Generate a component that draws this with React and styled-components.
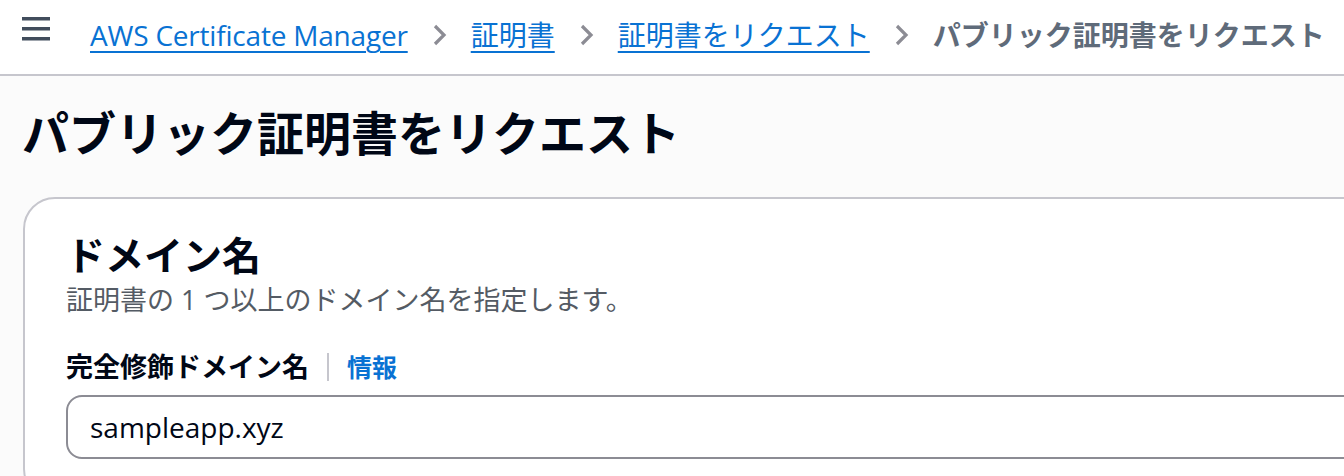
import React from 'react';
import styled, { createGlobalStyle } from 'styled-components';

const GlobalStyle = createGlobalStyle`
  html, body {
    margin: 0;
    padding: 0;
    background: #fbfbfb;
    overflow: hidden;
  }
  body {
    font-family: "Open Sans", "Noto Sans CJK JP", sans-serif;
    color: #000716;
  }
`;

const TopBar = styled.header`
  box-sizing: border-box;
  display: flex;
  align-items: center;
  height: 76px;
  padding: 0 0 4px 22px;
  background: #ffffff;
  border-bottom: 2px solid #c6c6cd;
`;

const MenuButton = styled.button`
  display: flex;
  align-items: center;
  justify-content: center;
  width: 28px;
  height: 24px;
  margin: -12px 40px 0 0;
  padding: 0;
  border: none;
  background: none;
  cursor: pointer;
`;

const Breadcrumbs = styled.nav`
  display: flex;
  align-items: center;
  font-size: 28px;
  line-height: 36px;
  white-space: nowrap;
`;

const Crumb = styled.a`
  color: #0972d3;
  letter-spacing: ${props => (props.latin ? '-0.2px' : '0')};
  text-decoration: underline;
  text-decoration-thickness: 2px;
  text-underline-offset: 5px;
  cursor: pointer;
`;

const CurrentCrumb = styled.span`
  color: #5f6b7a;
  font-weight: 700;
`;

const Separator = styled.span`
  display: flex;
  align-items: center;
  margin: 0 24px 0 25px;
`;

const Main = styled.main`
  padding: 29px 0 0 22px;
`;

const PageTitle = styled.h1`
  margin: 0 0 36px;
  font-size: 47px;
  line-height: 56px;
  font-weight: 700;
  color: #000716;
`;

const Container = styled.section`
  margin: 0 -80px 0 1px;
  padding: 32px 40px 40px 41px;
  background: #ffffff;
  border: 2px solid #c6c6cd;
  border-radius: 32px;
`;

const SectionTitle = styled.h2`
  margin: 0;
  font-size: 39px;
  line-height: 48px;
  font-weight: 700;
`;

const Description = styled.p`
  margin: 3px 0 0;
  font-size: 27px;
  line-height: 36px;
  color: #545b64;
`;

const FieldLabel = styled.div`
  display: flex;
  align-items: center;
  margin-top: 31px;
  font-size: 27px;
  line-height: 36px;
  font-weight: 700;
`;

const LabelDivider = styled.span`
  width: 2px;
  height: 28px;
  margin: 0 18px;
  background: #c6c6cd;
`;

const InfoLink = styled.a`
  color: #0972d3;
  font-size: 25px;
  font-weight: 700;
  cursor: pointer;
`;

const TextInput = styled.input`
  box-sizing: border-box;
  display: block;
  width: 100%;
  height: 64px;
  margin-top: 10px;
  padding: 0 22px;
  font-family: "Open Sans", "Noto Sans CJK JP", sans-serif;
  font-size: 28px;
  color: #000716;
  background: #ffffff;
  border: 2px solid #8c8c94;
  border-radius: 16px;
  outline: none;
`;

const MenuIcon = () => (
  <svg width="28" height="24" viewBox="0 0 28 24">
    <rect x="0" y="0" width="28" height="3.5" fill="#414d5c" />
    <rect x="0" y="10" width="28" height="3.5" fill="#414d5c" />
    <rect x="0" y="20" width="28" height="3.5" fill="#414d5c" />
  </svg>
);

const ChevronIcon = () => (
  <svg width="14" height="22" viewBox="0 0 14 22">
    <polyline points="2,2 11,11 2,20" fill="none" stroke="#8c8c94" strokeWidth="3.2" />
  </svg>
);

const crumbs = ['AWS Certificate Manager', '証明書', '証明書をリクエスト'];

const App = () => (
  <>
    <GlobalStyle />
    <TopBar>
      <MenuButton aria-label="メニュー">
        <MenuIcon />
      </MenuButton>
      <Breadcrumbs>
        {crumbs.map((label, i) => (
          <React.Fragment key={label}>
            <Crumb latin={i === 0}>{label}</Crumb>
            <Separator><ChevronIcon /></Separator>
          </React.Fragment>
        ))}
        <CurrentCrumb>パブリック証明書をリクエスト</CurrentCrumb>
      </Breadcrumbs>
    </TopBar>
    <Main>
      <PageTitle>パブリック証明書をリクエスト</PageTitle>
      <Container>
        <SectionTitle>ドメイン名</SectionTitle>
        <Description>証明書の 1 つ以上のドメイン名を指定します。</Description>
        <FieldLabel>
          完全修飾ドメイン名
          <LabelDivider />
          <InfoLink>情報</InfoLink>
        </FieldLabel>
        <TextInput defaultValue="sampleapp.xyz" />
      </Container>
    </Main>
  </>
);

export default App;
